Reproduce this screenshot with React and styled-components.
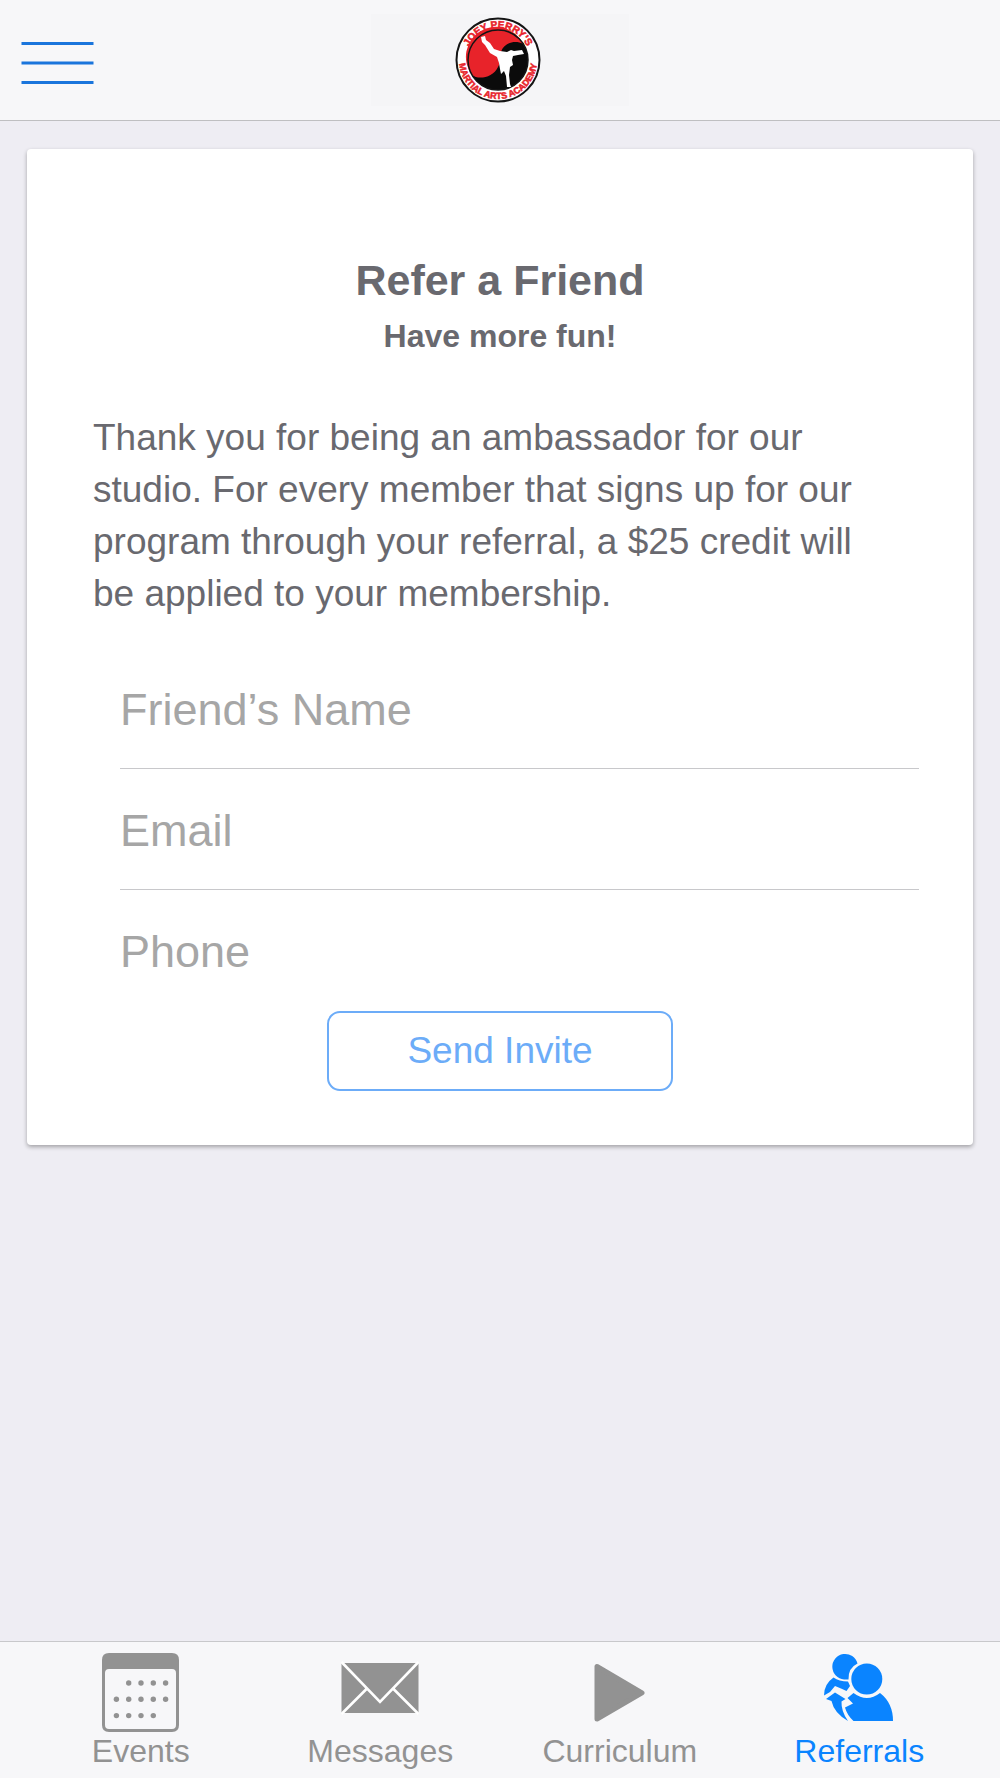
import React, { useState } from "react";
import styled, { createGlobalStyle, ThemeProvider } from "styled-components";

const theme = {
  blue: "#0a84ff",
  navBlue: "#1a75dc",
  paleBlue: "#6cacf8",
  darkGrey: "#69696f",
  grey: "#929292",
  placeholder: "#a6a6a6",
  line: "#c8c8cb",
  bar: "#f7f7f9",
  background: "#eeedf3",
};

const GlobalStyle = createGlobalStyle`
  * {
    box-sizing: border-box;
  }
  body {
    margin: 0;
    background-color: ${theme.background};
    font-family: "Liberation Sans", Arial, Helvetica, sans-serif;
  }
  h1, h2, p {
    margin: 0;
  }
`;

const Screen = styled.div`
  min-height: 100vh;
  display: flex;
  flex-direction: column;
`;

const Header = styled.header`
  display: grid;
  grid-template-columns: 1fr auto 1fr;
  align-items: center;
  padding: 14px 20px;
  background-color: ${(props) => props.theme.bar};
  border-bottom: 1px solid #bfbfc1;
`;

const MenuButton = styled.button`
  justify-self: start;
  display: flex;
  padding: 6px 0 0;
  border: none;
  background: none;
  color: ${(props) => props.theme.navBlue};
  cursor: pointer;
`;

const Brand = styled.div`
  display: flex;
  justify-content: center;
  width: 258px;
  padding: 2px 4px 2px 0;
  background-color: #f5f5f7;
`;

const Main = styled.main`
  flex: 1;
  padding: 28px 27px;
`;

const Card = styled.section`
  display: flex;
  flex-direction: column;
  padding: 105px 54px 54px 66px;
  background-color: white;
  border-radius: 4px;
  box-shadow: 0 2px 4px rgba(0, 0, 0, 0.32);
  color: ${(props) => props.theme.darkGrey};
`;

const Heading = styled.div`
  padding-right: 12px;
  text-align: center;
`;

const Title = styled.h1`
  font-size: 43px;
  line-height: 52px;
`;

const Subtitle = styled.h2`
  margin-top: 4px;
  font-size: 32px;
  line-height: 52px;
`;

const Text = styled.p`
  max-width: 780px;
  margin-top: 50px;
  font-size: 37px;
  line-height: 52px;
`;

const Form = styled.form`
  display: flex;
  flex-direction: column;
  margin-top: 28px;
`;

const Field = styled.input`
  margin-left: 27px;
  height: 121px;
  padding: 28px 0 24px;
  border: none;
  border-bottom: 1px solid ${(props) => props.theme.line};
  border-radius: 0;
  background: none;
  color: ${(props) => props.theme.darkGrey};
  font-family: inherit;
  font-size: 45px;
  &:last-of-type {
    border-bottom-color: transparent;
  }
  &::placeholder {
    color: ${(props) => props.theme.placeholder};
    opacity: 1;
  }
  &:focus {
    outline: none;
  }
`;

const SendButton = styled.button`
  align-self: center;
  width: 346px;
  height: 80px;
  margin-right: 12px;
  border: 2px solid ${(props) => props.theme.paleBlue};
  border-radius: 13px;
  background: none;
  color: ${(props) => props.theme.paleBlue};
  font-family: inherit;
  font-size: 37px;
  cursor: pointer;
`;

const TabBar = styled.nav`
  display: flex;
  padding: 10px 21px 8px;
  background-color: ${(props) => props.theme.bar};
  border-top: 1px solid ${(props) => props.theme.line};
`;

const Tab = styled.a`
  flex: 1;
  display: flex;
  flex-direction: column;
  align-items: center;
  color: ${(props) => (props.$active ? props.theme.blue : props.theme.grey)};
  font-size: 32px;
  line-height: 38px;
  text-decoration: none;
`;

const MenuIcon = () => (
  <svg width="74" height="48" viewBox="0 0 74 48" aria-hidden="true">
    <path
      d="M1.5 4.5H73.5M1.5 24H73.5M1.5 43.5H73.5"
      stroke="currentColor"
      strokeWidth="3"
    />
  </svg>
);

const Logo = () => (
  <svg
    width="88"
    height="88"
    viewBox="-44 -44 88 88"
    role="img"
    aria-label="Joey Perry's Martial Arts Academy"
  >
    <defs>
      <path id="logo-top" d="M-32 0A32 32 0 0 1 32 0" />
      <path id="logo-bottom" d="M-39 0A39 39 0 0 0 39 0" />
    </defs>
    <circle r="41.5" fill="white" stroke="#151515" strokeWidth="2" />
    <circle r="30" fill="#0b0b0b" />
    <path
      d="M-26 15A30 30 0 1 1 25 -16C18 -20 6 -18 3 -8C1 -3 3 2 0 7C-5 18 -20 20 -26 15Z"
      fill="#e8232a"
    />
    <circle r="30" fill="none" stroke="#151515" strokeWidth="1.5" />
    <path
      d="M-17 -23L-13 -24L-12 -20L-8 -17L-4 -11L2 -9L9 -8L13 -10L16 -9L24 -10L26 -6L20 -5L15 -4L14 0L15 5L12 7L11 15L12 24L13 27L9 27L8 16L6 11L3 14L2 9L1 3L-1 -3L-8 -7L-13 -15L-16 -18Z"
      fill="white"
    />
    <g
      fill="#e8232a"
      stroke="#e8232a"
      strokeWidth="0.5"
      fontFamily="Liberation Sans, sans-serif"
      fontWeight="700"
      textAnchor="middle"
    >
      <text fontSize="10">
        <textPath href="#logo-top" startOffset="50%">
          JOEY PERRY’S
        </textPath>
      </text>
      <text fontSize="9">
        <textPath href="#logo-bottom" startOffset="50%">
          MARTIAL ARTS ACADEMY
        </textPath>
      </text>
    </g>
  </svg>
);

const calendarDots = [
  [1, 0], [2, 0], [3, 0], [4, 0],
  [0, 1], [1, 1], [2, 1], [3, 1], [4, 1],
  [0, 2], [1, 2], [2, 2], [3, 2],
];

const EventsIcon = () => (
  <svg width="80" height="80" viewBox="0 0 80 80" fill="currentColor" aria-hidden="true">
    <path
      fillRule="evenodd"
      d="M8 1H71Q78 1 78 8V73Q78 80 71 80H8Q1 80 1 73V8Q1 1 8 1ZM8 17Q4 17 4 21V73Q4 77 8 77H71Q75 77 75 73V21Q75 17 71 17Z"
    />
    {calendarDots.map(([column, row]) => (
      <circle
        key={`${column}-${row}`}
        cx={15.4 + column * 12.3}
        cy={31 + row * 16.3}
        r="2.7"
      />
    ))}
  </svg>
);

const MessagesIcon = () => (
  <svg width="80" height="80" viewBox="0 0 80 80" aria-hidden="true">
    <path d="M1.5 11H78.5V61H1.5Z" fill="currentColor" />
    <path
      d="M1.5 10L40 50L78.5 10M1.5 62L27 36.5M78.5 62L53 36.5"
      fill="none"
      stroke="white"
      strokeWidth="2.6"
    />
  </svg>
);

const CurriculumIcon = () => (
  <svg width="80" height="80" viewBox="0 0 80 80" aria-hidden="true">
    <path
      d="M17 14.5V67L62 40.8Z"
      fill="currentColor"
      stroke="currentColor"
      strokeWidth="5"
      strokeLinejoin="round"
    />
  </svg>
);

const ReferralsIcon = () => (
  <svg width="80" height="80" viewBox="0 0 80 80" fill="currentColor" aria-hidden="true">
    <path d="M38.5 11.5A12.8 12.8 0 1 0 25 27.5L29.5 27.5Q29 16 38.5 11.5Z" />
    <circle cx="47.8" cy="27" r="15.5" />
    <path d="M14.5 25.5Q20 29.5 29 29.5L31 34L27.5 39L22 36.5L16 34L11 40L5 43.5Q5 32 14.5 25.5Z" />
    <path d="M7 47L16 40.5L26.5 47L22.5 49.5Q22 59 29 69Q15 61 12.5 49Z" />
    <path d="M34.5 41Q48 51 61 41Q74 51 74 69H34.5Q28 63 26 55.5L34 51.5L28.5 46Z" />
  </svg>
);

const tabs = [
  { label: "Events", Icon: EventsIcon },
  { label: "Messages", Icon: MessagesIcon },
  { label: "Curriculum", Icon: CurriculumIcon },
  { label: "Referrals", Icon: ReferralsIcon },
];

const fields = [
  { name: "name", type: "text", label: "Friend’s Name" },
  { name: "email", type: "email", label: "Email" },
  { name: "phone", type: "tel", label: "Phone" },
];

const App = () => {
  const [values, setValues] = useState({ name: "", email: "", phone: "" });
  const onChange = ({ target: { name, value } }) =>
    setValues({ ...values, [name]: value });

  return (
    <ThemeProvider theme={theme}>
      <GlobalStyle />
      <Screen>
        <Header>
          <MenuButton type="button" aria-label="Menu">
            <MenuIcon />
          </MenuButton>
          <Brand>
            <Logo />
          </Brand>
        </Header>
        <Main>
          <Card>
            <Heading>
              <Title>Refer a Friend</Title>
              <Subtitle>Have more fun!</Subtitle>
            </Heading>
            <Text>
              Thank you for being an ambassador for our studio. For every
              member that signs up for our program through your referral, a $25
              credit will be applied to your membership.
            </Text>
            <Form onSubmit={(e) => e.preventDefault()}>
              {fields.map(({ name, type, label }) => (
                <Field
                  key={name}
                  name={name}
                  type={type}
                  placeholder={label}
                  aria-label={label}
                  value={values[name]}
                  onChange={onChange}
                />
              ))}
              <SendButton type="submit">Send Invite</SendButton>
            </Form>
          </Card>
        </Main>
        <TabBar>
          {tabs.map(({ label, Icon }) => (
            <Tab
              key={label}
              href={`#${label.toLowerCase()}`}
              $active={label === "Referrals"}
            >
              <Icon />
              {label}
            </Tab>
          ))}
        </TabBar>
      </Screen>
    </ThemeProvider>
  );
};

export default App;
